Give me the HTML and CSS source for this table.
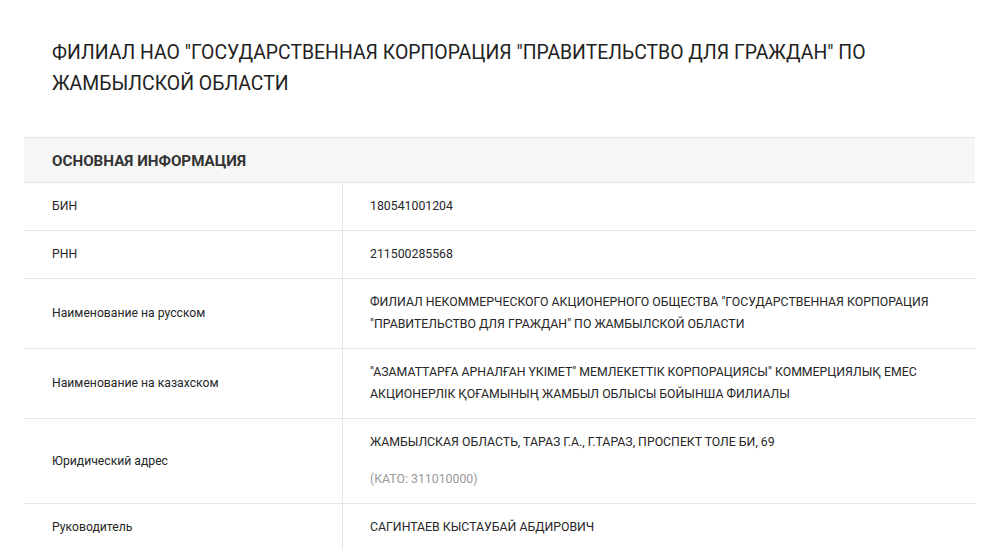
FILE: index.html
```html
<!DOCTYPE html>
<html lang="ru">
<head>
<meta charset="utf-8">
<title>Филиал НАО</title>
<link rel="stylesheet" href="styles.css">
</head>
<body>
<div class="page">
  <h1 class="title">ФИЛИАЛ НАО "ГОСУДАРСТВЕННАЯ КОРПОРАЦИЯ "ПРАВИТЕЛЬСТВО ДЛЯ ГРАЖДАН" ПО ЖАМБЫЛСКОЙ ОБЛАСТИ</h1>
  <table class="info">
    <thead>
      <tr><th colspan="2">ОСНОВНАЯ ИНФОРМАЦИЯ</th></tr>
    </thead>
    <tbody>
      <tr><td class="label">БИН</td><td class="value">180541001204</td></tr>
      <tr><td class="label">РНН</td><td class="value">211500285568</td></tr>
      <tr><td class="label">Наименование на русском</td><td class="value">ФИЛИАЛ НЕКОММЕРЧЕСКОГО АКЦИОНЕРНОГО ОБЩЕСТВА "ГОСУДАРСТВЕННАЯ КОРПОРАЦИЯ "ПРАВИТЕЛЬСТВО ДЛЯ ГРАЖДАН" ПО ЖАМБЫЛСКОЙ ОБЛАСТИ</td></tr>
      <tr><td class="label">Наименование на казахском</td><td class="value">"АЗАМАТТАРҒА АРНАЛҒАН ҮКІМЕТ" МЕМЛЕКЕТТІК КОРПОРАЦИЯСЫ" КОММЕРЦИЯЛЫҚ ЕМЕС АКЦИОНЕРЛІК ҚОҒАМЫНЫҢ ЖАМБЫЛ ОБЛЫСЫ БОЙЫНША ФИЛИАЛЫ</td></tr>
      <tr><td class="label">Юридический адрес</td><td class="value">ЖАМБЫЛСКАЯ ОБЛАСТЬ, ТАРАЗ Г.А., Г.ТАРАЗ, ПРОСПЕКТ ТОЛЕ БИ, 69<div class="kato">(КАТО: 311010000)</div></td></tr>
      <tr><td class="label">Руководитель</td><td class="value">САГИНТАЕВ КЫСТАУБАЙ АБДИРОВИЧ</td></tr>
    </tbody>
  </table>
</div>
</body>
</html>
```

FILE: styles.css
```css
html, body {
  margin: 0;
  padding: 0;
  background: #ffffff;
}
body {
  font-family: Roboto, "Noto Sans", "Liberation Sans", sans-serif;
  color: #262626;
}
.page {
  padding: 37px 25px 0 24px;
}
.title {
  margin: 0 0 38px 28px;
  font-size: 19.4px;
  font-weight: 400;
  line-height: 31px;
  color: #222222;
  max-width: 840px;
}
.info {
  width: 100%;
  border-collapse: collapse;
  font-size: 12.3px;
}
.info th {
  background: #f6f6f6;
  border-top: 1px solid #e4e4e4;
  border-bottom: 1px solid #e4e4e4;
  text-align: left;
  font-size: 15.2px;
  font-weight: 700;
  color: #333333;
  padding: 1px 28px 0;
  height: 43px;
}
.info td {
  border-bottom: 1px solid #e6e6e6;
  padding: 12px 28px 13px 27px;
  line-height: 22px;
  vertical-align: middle;
}
.info td.label {
  width: 262px;
  padding-left: 28px;
  border-right: 1px solid #e6e6e6;
  font-size: 12.2px;
}
.info td.value {
  padding-right: 40px;
}
.kato {
  margin-top: 15px;
  color: #9a9a9a;
}
```
